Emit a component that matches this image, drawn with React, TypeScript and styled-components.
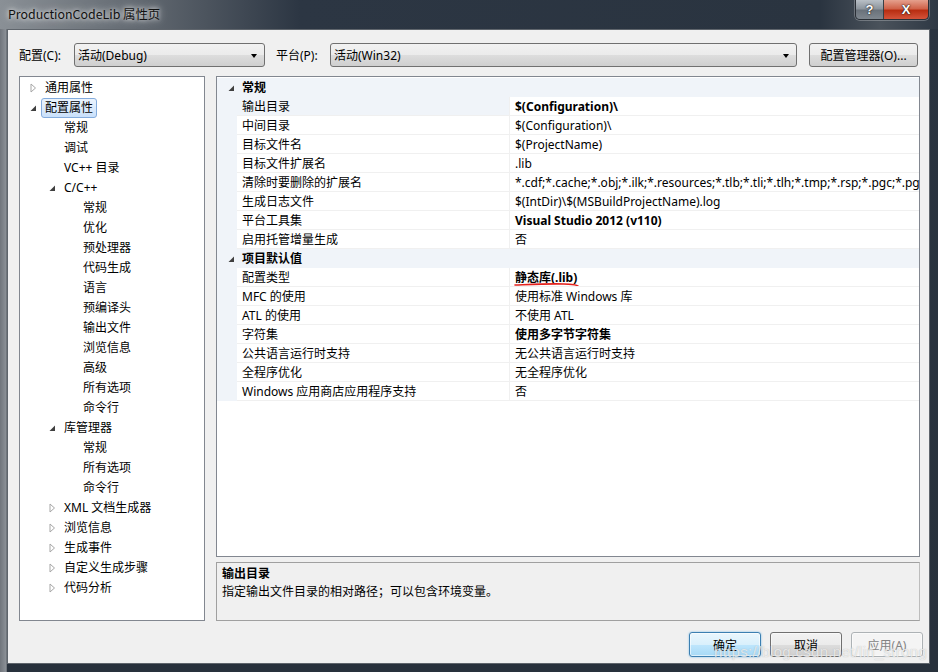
import React from "react";
import styled, { createGlobalStyle } from "styled-components";

const Global = createGlobalStyle`
  html, body { margin: 0; padding: 0; background: #27303b; }
  body { font-family: "Noto Sans", "Noto Sans CJK SC", sans-serif; }
  * { box-sizing: border-box; }
`;

const UI_FONT = `"Noto Sans", "Noto Sans CJK SC", sans-serif`;

const Frame = styled.div`
  position: relative;
  width: 938px;
  height: 672px;
  display: flex;
  flex-direction: column;
  background:
    linear-gradient(90deg, #70757c 0, #8b9096 6px, #555b62 7px, transparent 7px),
    linear-gradient(180deg, #2a3440 0, #28313c 100%);
  overflow: hidden;
`;

const TitleBar = styled.div`
  height: 29px;
  display: flex;
  justify-content: space-between;
  align-items: flex-start;
  padding-left: 8px;
  background: linear-gradient(90deg, #8a9096 0, #5f666e 150px, #2c3643 300px, #2a3440 820px, #4a525b 880px, #2e3844 938px);
`;

const Title = styled.div`
  margin-top: 5px;
  font-family: "Noto Sans CJK SC", sans-serif;
  font-size: 12.4px;
  line-height: 18px;
  color: #111;
  text-shadow: 0 0 8px rgba(255, 255, 255, 0.9), 0 0 4px rgba(255, 255, 255, 0.8);
`;

const Caption = styled.div`
  display: flex;
  margin-right: 9px;
  margin-top: 0;
  border: 1px solid #2a2f36;
  border-top: none;
  border-radius: 0 0 5px 5px;
  overflow: hidden;
  box-shadow: 0 0 0 1px rgba(255, 255, 255, 0.25);
`;

const CapButton = styled.div<{ $close?: boolean }>`
  width: ${(p) => (p.$close ? 45 : 27)}px;
  height: 19px;
  display: flex;
  align-items: center;
  justify-content: center;
  font-family: "Liberation Sans", sans-serif;
  font-weight: bold;
  font-size: 13px;
  color: #fff;
  text-shadow: 0 0 2px #222, 0 0 1px #000;
  background: ${(p) =>
    p.$close
      ? "linear-gradient(180deg, #e5a08d 0, #d0634a 45%, #b92e12 55%, #d4533a 100%)"
      : "linear-gradient(180deg, #b9c0c7 0, #8e969e 45%, #6a727b 55%, #7f878f 100%)"};
  border-left: ${(p) => (p.$close ? "1px solid #3a3f45" : "none")};
`;

const Client = styled.div`
  flex: 1;
  margin: 0 8px 8px 7px;
  border: 1px solid #5f656c;
  background: #f0f0f0;
  padding: 0 9px 6px 11px;
  display: flex;
  flex-direction: column;
  font-family: ${UI_FONT};
  font-size: 12px;
  color: #000;
`;

const Toolbar = styled.div`
  display: flex;
  align-items: center;
  padding-top: 13px;
  height: 37px;
`;

const ToolLabel = styled.div<{ $w: number; $ml?: number }>`
  width: ${(p) => p.$w}px;
  margin-left: ${(p) => p.$ml ?? 0}px;
  font-size: 12px;
  white-space: nowrap;
`;

const Combo = styled.div<{ $w: number }>`
  width: ${(p) => p.$w}px;
  height: 24px;
  border: 1px solid #707070;
  border-radius: 3px;
  background: linear-gradient(180deg, #f2f2f2 0, #ebebeb 50%, #dddddd 51%, #cfcfcf 100%);
  display: flex;
  align-items: center;
  justify-content: space-between;
  padding: 0 7px 0 3px;
  font-size: 12px;
`;

const ComboArrow = styled.span`
  width: 0;
  height: 0;
  border-left: 3.5px solid transparent;
  border-right: 3.5px solid transparent;
  border-top: 4px solid #000;
  margin-top: 1px;
`;

const ToolButton = styled.div`
  margin-left: 12px;
  width: 109px;
  height: 24px;
  border: 1px solid #707070;
  border-radius: 3px;
  background: linear-gradient(180deg, #f2f2f2 0, #ebebeb 50%, #dddddd 51%, #cfcfcf 100%);
  display: flex;
  align-items: center;
  justify-content: center;
  font-size: 12px;
`;

const Main = styled.div`
  flex: 1;
  margin-top: 9px;
  display: grid;
  grid-template-columns: 186px 1fr;
  column-gap: 11px;
  min-height: 0;
`;

const TreePanel = styled.div`
  background: #fff;
  border: 1px solid #828790;
  padding-top: 1px;
  overflow: hidden;
`;

const TreeRow = styled.div<{ $level: number }>`
  height: 20px;
  display: flex;
  align-items: center;
  padding-left: ${(p) => 10 + p.$level * 19}px;
  white-space: nowrap;
`;

const ArrowSlot = styled.span`
  width: 11px;
  height: 20px;
  display: flex;
  align-items: center;
  flex-shrink: 0;
`;

const TreeLabel = styled.span<{ $selected?: boolean }>`
  height: 20px;
  line-height: 18px;
  padding: 0 3px;
  border: 1px solid ${(p) => (p.$selected ? "#84acdd" : "transparent")};
  border-radius: 3px;
  background: ${(p) =>
    p.$selected ? "linear-gradient(180deg, #eaf3fd 0, #dcebfc 50%, #c9e0fb 100%)" : "transparent"};
`;

const RightCol = styled.div`
  display: flex;
  flex-direction: column;
  gap: 5px;
  min-height: 0;
`;

const Grid = styled.div`
  flex: 1;
  background: #fff;
  border: 1px solid #828790;
  padding-top: 1px;
  overflow: hidden;
`;

const Row = styled.div<{ $header?: boolean }>`
  height: 19px;
  display: grid;
  grid-template-columns: 20px 273px 1fr;
  background: ${(p) => (p.$header ? "#f0f4f9" : "transparent")};
`;

const Gutter = styled.div`
  background: #f0f4f9;
  display: flex;
  align-items: center;
  justify-content: flex-end;
  padding-right: 2px;
`;

const HeaderText = styled.div`
  grid-column: 2 / 4;
  font-weight: bold;
  line-height: 19px;
  padding-left: 5px;
  white-space: nowrap;
`;

const NameCell = styled.div<{ $selected?: boolean }>`
  padding-top: 1px;
  line-height: 17px;
  padding-left: 5px;
  border-bottom: 1px solid #f0f0f0;
  border-right: 1px solid #f0f0f0;
  white-space: nowrap;
  overflow: hidden;
  background: ${(p) => (p.$selected ? "#f0f4f9" : "#fff")};
`;

const ValueCell = styled.div<{ $bold?: boolean }>`
  position: relative;
  padding-top: 1px;
  line-height: 17px;
  padding-left: 5px;
  border-bottom: 1px solid #f0f0f0;
  white-space: nowrap;
  overflow: hidden;
  font-weight: ${(p) => (p.$bold ? "bold" : "normal")};
`;

const RedMark = styled.svg`
  position: absolute;
  left: 4px;
  top: 13px;
  pointer-events: none;
`;

const Desc = styled.div`
  height: 59px;
  border: 1px solid #a0a0a0;
  border-right-color: #bdbdbd;
  background: #f0f0f0;
  padding: 2px 5px;
  line-height: 18px;
`;

const DescTitle = styled.div`
  font-weight: bold;
`;

const Footer = styled.div`
  display: flex;
  justify-content: flex-end;
  gap: 9px;
  margin-top: 11px;
  margin-right: -3px;
`;

const DlgButton = styled.div<{ $kind: "default" | "normal" | "disabled" }>`
  width: 72px;
  height: 25px;
  border-radius: 3px;
  display: flex;
  align-items: center;
  justify-content: center;
  font-size: 12px;
  border: 1px solid
    ${(p) => (p.$kind === "default" ? "#3c7fb1" : p.$kind === "normal" ? "#707070" : "#adb2b5")};
  color: ${(p) => (p.$kind === "disabled" ? "#838383" : "#000")};
  background: ${(p) =>
    p.$kind === "default"
      ? "linear-gradient(180deg, #eaf6fd 0, #d9f0fc 50%, #bee6fd 51%, #a7d9f5 100%)"
      : p.$kind === "normal"
      ? "linear-gradient(180deg, #f2f2f2 0, #ebebeb 50%, #dddddd 51%, #cfcfcf 100%)"
      : "#f4f4f4"};
  box-shadow: ${(p) => (p.$kind === "default" ? "inset 0 0 0 1px rgba(255,255,255,0.6), 0 0 2px #6cb6e6" : "inset 0 0 0 1px rgba(255,255,255,0.5)")};
`;

const Watermark = styled.div`
  position: absolute;
  left: 714px;
  top: 643px;
  font-family: "Liberation Sans", sans-serif;
  font-size: 15px;
  letter-spacing: 0.3px;
  color: rgba(255, 255, 255, 0.7);
  text-shadow: 0 0 1px rgba(120, 120, 120, 0.5);
  pointer-events: none;
  white-space: nowrap;
`;

const Collapsed = () => (
  <svg width="7" height="10" viewBox="0 0 7 10">
    <polygon points="1,1 5.5,5 1,9" fill="#fff" stroke="#a6a6a6" strokeWidth="1" />
  </svg>
);

const Expanded = () => (
  <svg width="7" height="8" viewBox="0 0 7 8">
    <polygon points="6,1.5 6,7 0.5,7" fill="#3f3f3f" />
  </svg>
);

type TreeItem = { label: string; level: number; arrow?: "c" | "e"; selected?: boolean };

const tree: TreeItem[] = [
  { label: "通用属性", level: 0, arrow: "c" },
  { label: "配置属性", level: 0, arrow: "e", selected: true },
  { label: "常规", level: 1 },
  { label: "调试", level: 1 },
  { label: "VC++ 目录", level: 1 },
  { label: "C/C++", level: 1, arrow: "e" },
  { label: "常规", level: 2 },
  { label: "优化", level: 2 },
  { label: "预处理器", level: 2 },
  { label: "代码生成", level: 2 },
  { label: "语言", level: 2 },
  { label: "预编译头", level: 2 },
  { label: "输出文件", level: 2 },
  { label: "浏览信息", level: 2 },
  { label: "高级", level: 2 },
  { label: "所有选项", level: 2 },
  { label: "命令行", level: 2 },
  { label: "库管理器", level: 1, arrow: "e" },
  { label: "常规", level: 2 },
  { label: "所有选项", level: 2 },
  { label: "命令行", level: 2 },
  { label: "XML 文档生成器", level: 1, arrow: "c" },
  { label: "浏览信息", level: 1, arrow: "c" },
  { label: "生成事件", level: 1, arrow: "c" },
  { label: "自定义生成步骤", level: 1, arrow: "c" },
  { label: "代码分析", level: 1, arrow: "c" },
];

type Prop = { name: string; value: string; bold?: boolean; mark?: boolean; selected?: boolean };
type Section = { title: string; rows: Prop[] };

const sections: Section[] = [
  {
    title: "常规",
    rows: [
      { name: "输出目录", value: "$(Configuration)\\", bold: true, selected: true },
      { name: "中间目录", value: "$(Configuration)\\" },
      { name: "目标文件名", value: "$(ProjectName)" },
      { name: "目标文件扩展名", value: ".lib" },
      {
        name: "清除时要删除的扩展名",
        value:
          "*.cdf;*.cache;*.obj;*.ilk;*.resources;*.tlb;*.tli;*.tlh;*.tmp;*.rsp;*.pgc;*.pgd;*.meta;*.tlog;*.manifest;*.res;*.pch;*.exp;*.idb;*.rep;*.xdc;*.pdb",
      },
      { name: "生成日志文件", value: "$(IntDir)\\$(MSBuildProjectName).log" },
      { name: "平台工具集", value: "Visual Studio 2012 (v110)", bold: true },
      { name: "启用托管增量生成", value: "否" },
    ],
  },
  {
    title: "项目默认值",
    rows: [
      { name: "配置类型", value: "静态库(.lib)", bold: true, mark: true },
      { name: "MFC 的使用", value: "使用标准 Windows 库" },
      { name: "ATL 的使用", value: "不使用 ATL" },
      { name: "字符集", value: "使用多字节字符集", bold: true },
      { name: "公共语言运行时支持", value: "无公共语言运行时支持" },
      { name: "全程序优化", value: "无全程序优化" },
      { name: "Windows 应用商店应用程序支持", value: "否" },
    ],
  },
];

export default function App() {
  return (
    <>
      <Global />
      <Frame>
        <TitleBar>
          <Title>ProductionCodeLib 属性页</Title>
          <Caption>
            <CapButton>?</CapButton>
            <CapButton $close>X</CapButton>
          </Caption>
        </TitleBar>
        <Client>
          <Toolbar>
            <ToolLabel $w={55}>配置(C):</ToolLabel>
            <Combo $w={191}>
              <span>活动(Debug)</span>
              <ComboArrow />
            </Combo>
            <ToolLabel $w={54} $ml={11}>平台(P):</ToolLabel>
            <Combo $w={467}>
              <span>活动(Win32)</span>
              <ComboArrow />
            </Combo>
            <ToolButton>配置管理器(O)...</ToolButton>
          </Toolbar>
          <Main>
            <TreePanel>
              {tree.map((t, i) => (
                <TreeRow key={i} $level={t.level}>
                  <ArrowSlot>{t.arrow === "c" ? <Collapsed /> : t.arrow === "e" ? <Expanded /> : null}</ArrowSlot>
                  <TreeLabel $selected={t.selected}>{t.label}</TreeLabel>
                </TreeRow>
              ))}
            </TreePanel>
            <RightCol>
              <Grid>
                {sections.map((s) => (
                  <React.Fragment key={s.title}>
                    <Row $header>
                      <Gutter>
                        <Expanded />
                      </Gutter>
                      <HeaderText>{s.title}</HeaderText>
                    </Row>
                    {s.rows.map((r) => (
                      <Row key={r.name}>
                        <Gutter />
                        <NameCell $selected={r.selected}>{r.name}</NameCell>
                        <ValueCell $bold={r.bold}>
                          {r.value}
                          {r.mark && (
                            <RedMark width="66" height="8" viewBox="0 0 66 8">
                              <path d="M1 4 C 15 3.5, 35 2.5, 50 3 C 58 3.3, 63 4, 64 5" fill="none" stroke="#e3211c" strokeWidth="1.6" strokeLinecap="round" />
                            </RedMark>
                          )}
                        </ValueCell>
                      </Row>
                    ))}
                  </React.Fragment>
                ))}
              </Grid>
              <Desc>
                <DescTitle>输出目录</DescTitle>
                <div>指定输出文件目录的相对路径；可以包含环境变量。</div>
              </Desc>
            </RightCol>
          </Main>
          <Footer>
            <DlgButton $kind="default">确定</DlgButton>
            <DlgButton $kind="normal">取消</DlgButton>
            <DlgButton $kind="disabled">应用(A)</DlgButton>
          </Footer>
        </Client>
        <Watermark>https://blog.csdn.net/lin_strong</Watermark>
      </Frame>
    </>
  );
}
